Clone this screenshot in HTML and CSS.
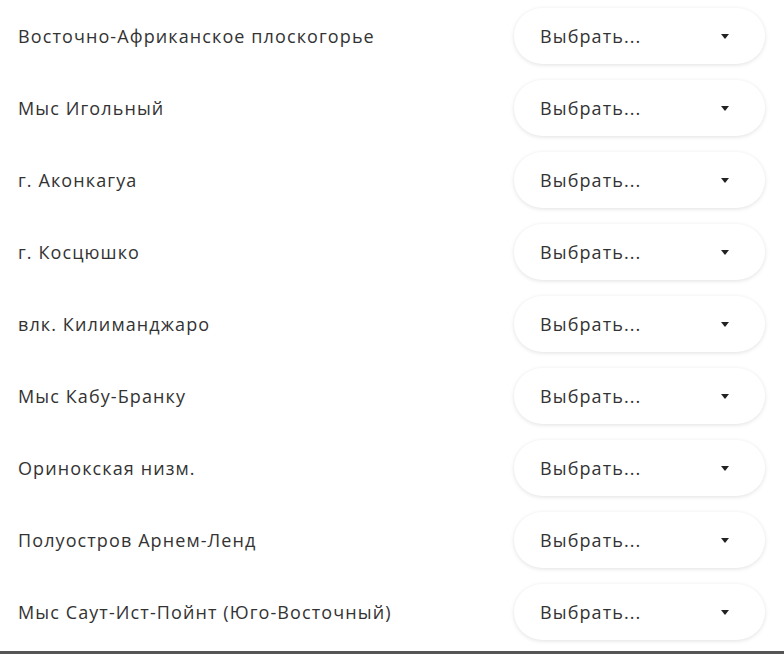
FILE: index.html
```html
<!DOCTYPE html>
<html lang="ru">
<head>
  <meta charset="UTF-8">
  <meta name="viewport" content="width=device-width, initial-scale=1.0">
  <title>Сопоставление</title>
  <link rel="stylesheet" href="styles.css">
</head>
<body>
  <div class="list">
    <div class="row">
      <span class="label">Восточно-Африканское плоскогорье</span>
      <div class="select"><span>Выбрать...</span><i class="caret"></i></div>
    </div>
    <div class="row">
      <span class="label">Мыс Игольный</span>
      <div class="select"><span>Выбрать...</span><i class="caret"></i></div>
    </div>
    <div class="row">
      <span class="label">г. Аконкагуа</span>
      <div class="select"><span>Выбрать...</span><i class="caret"></i></div>
    </div>
    <div class="row">
      <span class="label">г. Косцюшко</span>
      <div class="select"><span>Выбрать...</span><i class="caret"></i></div>
    </div>
    <div class="row">
      <span class="label">влк. Килиманджаро</span>
      <div class="select"><span>Выбрать...</span><i class="caret"></i></div>
    </div>
    <div class="row">
      <span class="label">Мыс Кабу-Бранку</span>
      <div class="select"><span>Выбрать...</span><i class="caret"></i></div>
    </div>
    <div class="row">
      <span class="label">Оринокская низм.</span>
      <div class="select"><span>Выбрать...</span><i class="caret"></i></div>
    </div>
    <div class="row">
      <span class="label">Полуостров Арнем-Ленд</span>
      <div class="select"><span>Выбрать...</span><i class="caret"></i></div>
    </div>
    <div class="row">
      <span class="label">Мыс Саут-Ист-Пойнт (Юго-Восточный)</span>
      <div class="select"><span>Выбрать...</span><i class="caret"></i></div>
    </div>
  </div>
  <div class="bottom-line"></div>
</body>
</html>
```

FILE: styles.css
```css
body {
  margin: 0;
  background: #fff;
  font-family: "Open Sans", "Noto Sans", sans-serif;
  color: #333;
  font-size: 18px;
  font-weight: 500;
  letter-spacing: 1.1px;
}
.list {
  padding: 0 18px 0 18px;
}
.row {
  height: 72px;
  display: flex;
  align-items: center;
  justify-content: space-between;
}
.label {
  color: #333;
}
.select {
  width: 251px;
  height: 56px;
  margin-right: 1px;
  box-sizing: border-box;
  padding: 0 36px 0 26px;
  display: flex;
  align-items: center;
  justify-content: space-between;
  background: #fff;
  border-radius: 28px;
  box-shadow: 0 1px 4px rgba(0, 0, 0, 0.12);
  color: #333;
}
.caret {
  width: 0;
  height: 0;
  border-left: 4px solid transparent;
  border-right: 4px solid transparent;
  border-top: 5px solid #222;
}
.bottom-line {
  margin-top: 3px;
  height: 3px;
  background: #555;
}
```
